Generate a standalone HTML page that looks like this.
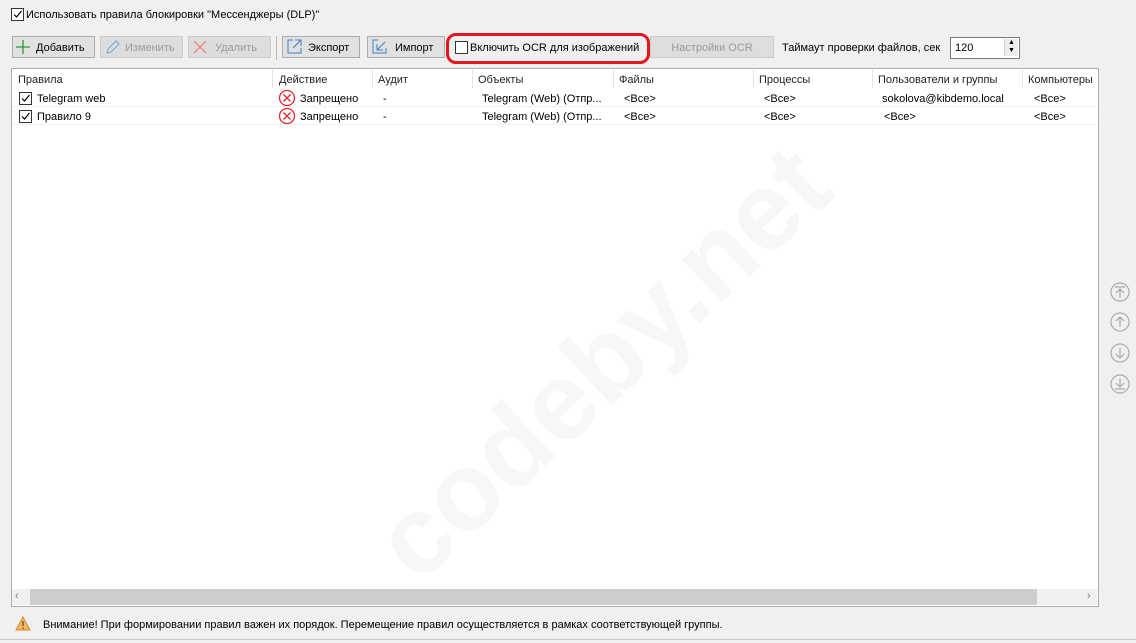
<!DOCTYPE html>
<html><head><meta charset="utf-8"><style>
body{margin:0;width:1136px;height:643px;background:#f0f0f0;font-family:"Liberation Sans",sans-serif;font-size:11px;color:#000;position:relative;overflow:hidden}
.a{position:absolute;white-space:nowrap}
.cb{position:absolute;width:11px;height:11px;border:1px solid #333;background:#fff}
.btn{position:absolute;top:36px;height:22px;border:1px solid #adadad;background:#e1e1e1;box-sizing:border-box;line-height:22px}
.dis{color:#9a9a9a;background:#ddd;border-color:#ccc}
.hd{top:74px;color:#222}
.sep{position:absolute;top:70px;width:1px;height:18px;background:#e5e5e5}
.row{position:absolute;left:12px;width:1085px;height:1px;background:#f0f0f0}
</style></head><body>
<div class="cb" style="left:11px;top:8px"><svg width="11" height="11"><path d="M2 5.5l2.5 2.5 5-6" stroke="#000" fill="none" stroke-width="1.2"/></svg></div>
<div class="a" style="left:26px;top:9px">Использовать правила блокировки "Мессенджеры (DLP)"</div>

<div class="btn" style="left:12px;width:83px"><svg class="a" style="left:2px;top:2px" width="16" height="16"><path d="M8 1v14M1 8h14" stroke="#2a9a3a" stroke-width="1.3"/></svg><span class="a" style="left:23px">Добавить</span></div>
<div class="btn dis" style="left:100px;width:83px"><svg class="a" style="left:3px;top:2px" width="16" height="16"><path d="M3 14l1-4 8-8 3 3-8 8z" stroke="#6fa3d6" fill="none"/></svg><span class="a" style="left:24px">Изменить</span></div>
<div class="btn dis" style="left:188px;width:83px"><svg class="a" style="left:3px;top:2px" width="16" height="16"><path d="M2 2l12 12M14 2L2 14" stroke="#e88" stroke-width="1.3"/></svg><span class="a" style="left:26px">Удалить</span></div>
<div class="a" style="left:276px;top:36px;width:1px;height:24px;background:#bbb"></div>
<div class="btn" style="left:282px;width:78px"><svg class="a" style="left:3px;top:1px" width="17" height="17"><path d="M7 2H2v13h13v-5M9 2h6v6M15 2L7 10" stroke="#3b7fc4" fill="none"/></svg><span class="a" style="left:25px">Экспорт</span></div>
<div class="btn" style="left:367px;width:78px"><svg class="a" style="left:3px;top:1px" width="17" height="17"><path d="M7 2H2v13h13v-5M6 6v6h6M6 12l8-8" stroke="#3b7fc4" fill="none"/></svg><span class="a" style="left:27px">Импорт</span></div>
<div class="btn dis" style="left:650px;width:124px;text-align:center">Настройки OCR</div>
<div class="a" style="left:446px;top:33px;width:198px;height:25px;border:3px solid #e3161e;border-radius:10px;background:#f0f0f0"></div>
<div class="cb" style="left:455px;top:41px"></div>
<div class="a" style="left:470px;top:42px">Включить OCR для изображений</div>
<div class="a" style="left:782px;top:42px">Таймаут проверки файлов, сек</div>
<div class="a" style="left:950px;top:37px;width:68px;height:20px;border:1px solid #7a7a7a;background:#fff"><span class="a" style="left:4px;top:4px">120</span><div class="a" style="left:53px;top:1px;width:13px;height:17px;border-left:1px solid #ccc;background:#eee;font-size:7px;line-height:8px;text-align:center">▲<br>▼</div></div>

<div class="a" style="left:11px;top:68px;width:1086px;height:537px;border:1px solid #adadad;background:#fff;overflow:hidden">
<div class="a" style="left:290px;top:230px;font-size:110px;font-weight:bold;color:#f7f7f7;transform:rotate(-43deg);transform-origin:center;width:600px;text-align:center">codeby.net</div>
</div>
<div class="a hd" style="left:18px">Правила</div>
<div class="sep" style="left:272px"></div><div class="a hd" style="left:279px">Действие</div>
<div class="sep" style="left:372px"></div><div class="a hd" style="left:378px">Аудит</div>
<div class="sep" style="left:472px"></div><div class="a hd" style="left:478px">Объекты</div>
<div class="sep" style="left:613px"></div><div class="a hd" style="left:619px">Файлы</div>
<div class="sep" style="left:753px"></div><div class="a hd" style="left:759px">Процессы</div>
<div class="sep" style="left:872px"></div><div class="a hd" style="left:878px">Пользователи и группы</div>
<div class="sep" style="left:1022px"></div><div class="a hd" style="left:1028px">Компьютеры</div>
<div class="row" style="top:106px"></div><div class="row" style="top:124px"></div>

<div class="cb" style="left:19px;top:92px"><svg width="11" height="11"><path d="M2 5.5l2.5 2.5 5-6" stroke="#000" fill="none" stroke-width="1.2"/></svg></div>
<div class="a" style="left:37px;top:93px">Telegram web</div>
<svg class="a" style="left:278px;top:89px" width="18" height="18"><circle cx="9" cy="9" r="7.5" stroke="#e0282e" fill="none" stroke-width="1.3"/><path d="M5.5 5.5l7 7M12.5 5.5l-7 7" stroke="#e0282e" stroke-width="1.3"/></svg>
<div class="a" style="left:300px;top:93px">Запрещено</div><div class="a" style="left:383px;top:93px">-</div>
<div class="a" style="left:482px;top:93px">Telegram (Web) (Отпр...</div><div class="a" style="left:624px;top:93px">&lt;Все&gt;</div><div class="a" style="left:764px;top:93px">&lt;Все&gt;</div><div class="a" style="left:882px;top:93px">sokolova@kibdemo.local</div><div class="a" style="left:1034px;top:93px">&lt;Все&gt;</div>

<div class="cb" style="left:19px;top:110px"><svg width="11" height="11"><path d="M2 5.5l2.5 2.5 5-6" stroke="#000" fill="none" stroke-width="1.2"/></svg></div>
<div class="a" style="left:37px;top:111px">Правило 9</div>
<svg class="a" style="left:278px;top:107px" width="18" height="18"><circle cx="9" cy="9" r="7.5" stroke="#e0282e" fill="none" stroke-width="1.3"/><path d="M5.5 5.5l7 7M12.5 5.5l-7 7" stroke="#e0282e" stroke-width="1.3"/></svg>
<div class="a" style="left:300px;top:111px">Запрещено</div><div class="a" style="left:383px;top:111px">-</div>
<div class="a" style="left:482px;top:111px">Telegram (Web) (Отпр...</div><div class="a" style="left:624px;top:111px">&lt;Все&gt;</div><div class="a" style="left:764px;top:111px">&lt;Все&gt;</div><div class="a" style="left:884px;top:111px">&lt;Все&gt;</div><div class="a" style="left:1034px;top:111px">&lt;Все&gt;</div>

<div class="a" style="left:12px;top:589px;width:1085px;height:16px;background:#f0f0f0"></div>
<div class="a" style="left:30px;top:589px;width:1007px;height:16px;background:#cdcdcd"></div>
<div class="a" style="left:15px;top:590px;color:#777;font-size:11px">‹</div><div class="a" style="left:1087px;top:590px;color:#777;font-size:11px">›</div>

<svg class="a" style="left:1109px;top:281px" width="22" height="116"><g stroke="#aaa" fill="none" stroke-width="1.2"><circle cx="11" cy="11" r="9"/><path d="M6 6h10M11 8v9M7 12l4-4 4 4"/><circle cx="11" cy="41" r="9"/><path d="M11 36v10M7 40l4-4 4 4"/><circle cx="11" cy="72" r="9"/><path d="M11 67v10M7 73l4 4 4-4"/><circle cx="11" cy="103" r="9"/><path d="M6 108h10M11 97v9M7 102l4 4 4-4"/></g></svg>

<svg class="a" style="left:15px;top:616px" width="16" height="15"><path d="M8 1L15 14H1z" fill="#f4b860" stroke="#d9892b"/><path d="M8 5v5M8 11.5v1.5" stroke="#333"/></svg>
<div class="a" style="left:43px;top:619px;font-size:11px">Внимание! При формировании правил важен их порядок. Перемещение правил осуществляется в рамках соответствующей группы.</div>
<div class="a" style="left:0;top:639px;width:1136px;height:1px;background:#c8c8c8"></div>
</body></html>
